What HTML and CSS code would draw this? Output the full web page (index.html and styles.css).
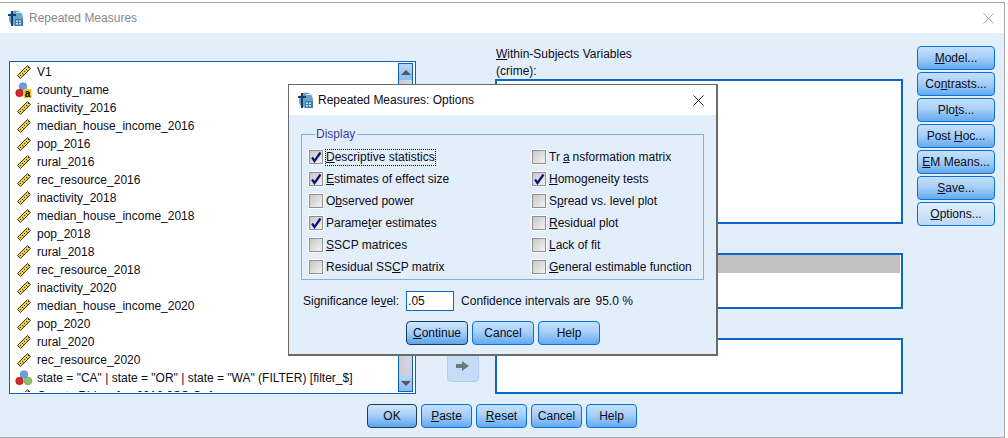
FILE: index.html
```html
<!DOCTYPE html>
<html lang="en">
<head>
<meta charset="utf-8">
<title>Repeated Measures</title>
<link rel="stylesheet" href="styles.css">
</head>
<body>
<svg class="defs" width="0" height="0" aria-hidden="true">
  <defs>
    <symbol id="ruler" viewBox="0 0 16 16">
      <path d="M1.5 11.5 11.5 1.5l3 3-10 10z" fill="#f2cf3a" stroke="#3a3a2a" stroke-width="1"/>
      <path d="M4 11l1 1M6 9l1.500 1.500M8 7l1 1M10 5l1.500 1.500M12 3l1 1" stroke="#3a3a2a" stroke-width="1" fill="none"/>
    </symbol>
    <symbol id="nominal" viewBox="0 0 18 16">
      <circle cx="8" cy="4.500" r="3.800" fill="#6d9fdc" stroke="#4a78b8" stroke-width=".6"/>
      <circle cx="4.500" cy="11" r="3.800" fill="#d4282f" stroke="#a01a20" stroke-width=".6"/>
      <rect x="8.500" y="7" width="8" height="9" fill="#f4c81e"/>
      <text x="12.500" y="15" class="nominal-a">a</text>
    </symbol>
    <symbol id="filter" viewBox="0 0 18 16">
      <circle cx="9" cy="4.500" r="3.800" fill="#6d9fdc" stroke="#4a78b8" stroke-width=".6"/>
      <circle cx="4.500" cy="11" r="3.800" fill="#d4282f" stroke="#a01a20" stroke-width=".6"/>
      <circle cx="13" cy="11" r="3.800" fill="#8fc06a" stroke="#5f8f44" stroke-width=".6"/>
    </symbol>
    <symbol id="app" viewBox="0 0 17 17">
      <path d="M2 8a7 7 0 0 1 14-1v9H8A7 7 0 0 1 2 8z" fill="#6ea3c9"/>
      <path d="M8 9h8v7H8z" fill="#3b7fb0"/>
      <path d="M9 10.500h2v1.500H9zM12 10.500h2v1.500h-2zM9 13h2v1.500H9zM12 13h2v1.500h-2z" fill="#cfe3f2"/>
      <path d="M5 1v15M1 5h8" stroke="#14406e" stroke-width="2" fill="none"/>
      <path d="M9 2.500h7" stroke="#d9e8f3" stroke-width="1"/>
    </symbol>
    <symbol id="check" viewBox="0 0 14 14">
      <path d="M3 7.500 5.500 11 11.500 2.500" fill="none" stroke="#11117a" stroke-width="2.200"/>
    </symbol>
  </defs>
</svg>

<div class="window">
  <header class="titlebar">
    <svg class="app-icon"><use href="#app"/></svg>
    <span class="title-text">Repeated Measures</span>
    <svg class="close close-dim" viewBox="0 0 11 11"><path d="M.5.500l10 10M10.500.500l-10 10"/></svg>
  </header>

  <main class="body">
    <div class="columns">
      <div class="list">
        <ul class="vars">
          <li><svg class="ico"><use href="#ruler"/></svg>V1</li>
          <li><svg class="ico"><use href="#nominal"/></svg>county_name</li>
          <li><svg class="ico"><use href="#ruler"/></svg>inactivity_2016</li>
          <li><svg class="ico"><use href="#ruler"/></svg>median_house_income_2016</li>
          <li><svg class="ico"><use href="#ruler"/></svg>pop_2016</li>
          <li><svg class="ico"><use href="#ruler"/></svg>rural_2016</li>
          <li><svg class="ico"><use href="#ruler"/></svg>rec_resource_2016</li>
          <li><svg class="ico"><use href="#ruler"/></svg>inactivity_2018</li>
          <li><svg class="ico"><use href="#ruler"/></svg>median_house_income_2018</li>
          <li><svg class="ico"><use href="#ruler"/></svg>pop_2018</li>
          <li><svg class="ico"><use href="#ruler"/></svg>rural_2018</li>
          <li><svg class="ico"><use href="#ruler"/></svg>rec_resource_2018</li>
          <li><svg class="ico"><use href="#ruler"/></svg>inactivity_2020</li>
          <li><svg class="ico"><use href="#ruler"/></svg>median_house_income_2020</li>
          <li><svg class="ico"><use href="#ruler"/></svg>pop_2020</li>
          <li><svg class="ico"><use href="#ruler"/></svg>rural_2020</li>
          <li><svg class="ico"><use href="#ruler"/></svg>rec_resource_2020</li>
          <li><svg class="ico"><use href="#filter"/></svg>state = "CA" | state = "OR" | state = "WA" (FILTER) [filter_$]</li>
          <li><svg class="ico"><use href="#ruler"/></svg>County Rid... of ... 2016 0SS O..f</li>
        </ul>
        <div class="scrollbar">
          <div class="sb-btn"><span class="tri-up"></span></div>
          <div class="sb-track"></div>
          <div class="sb-btn"><span class="tri-down"></span></div>
        </div>
      </div>

      <div class="mover">
        <div class="arrow-btn">
          <svg class="arrow" viewBox="0 0 14 12"><path d="M0 4h6V1l7 5-7 5V8H0z" fill="#6f7780"/></svg>
        </div>
      </div>

      <div class="targets">
        <div class="t-label"><span><u>W</u>ithin-Subjects Variables</span><span>(crime):</span></div>
        <div class="box box-a"></div>
        <div class="box box-b"><div class="grey-row"></div></div>
        <div class="box box-c"></div>
      </div>

      <div class="side">
        <button class="btn btn-side"><u>M</u>odel...</button>
        <button class="btn btn-side">Co<u>n</u>trasts...</button>
        <button class="btn btn-side">Plo<u>t</u>s...</button>
        <button class="btn btn-side">Post <u>H</u>oc...</button>
        <button class="btn btn-side"><u>E</u>M Means...</button>
        <button class="btn btn-side"><u>S</u>ave...</button>
        <button class="btn btn-side btn-light"><u>O</u>ptions...</button>
      </div>
    </div>

    <div class="actions">
      <button class="btn btn-main btn-ok">OK</button>
      <button class="btn btn-main"><u>P</u>aste</button>
      <button class="btn btn-main"><u>R</u>eset</button>
      <button class="btn btn-main">Cancel</button>
      <button class="btn btn-main">Help</button>
    </div>
  </main>
</div>

<section class="dialog">
  <header class="d-title">
    <svg class="app-icon"><use href="#app"/></svg>
    <span class="d-title-text">Repeated Measures: Options</span>
    <svg class="close" viewBox="0 0 11 11"><path d="M.5.500l10 10M10.500.500l-10 10"/></svg>
  </header>
  <div class="d-body">
    <fieldset class="group">
      <legend>Display</legend>
      <div class="opts">
        <div class="opt"><span class="cb"><svg><use href="#check"/></svg></span><span class="focus"><u>D</u>escriptive statistics</span></div>
        <div class="opt"><span class="cb"></span>Tr<u>a</u>nsformation matrix</div>
        <div class="opt"><span class="cb"><svg><use href="#check"/></svg></span><span><u>E</u>stimates of effect size</span></div>
        <div class="opt"><span class="cb"><svg><use href="#check"/></svg></span><span><u>H</u>omogeneity tests</span></div>
        <div class="opt"><span class="cb"></span><span>O<u>b</u>served power</span></div>
        <div class="opt"><span class="cb"></span><span>S<u>p</u>read vs. level plot</span></div>
        <div class="opt"><span class="cb"><svg><use href="#check"/></svg></span><span>Parame<u>t</u>er estimates</span></div>
        <div class="opt"><span class="cb"></span><span><u>R</u>esidual plot</span></div>
        <div class="opt"><span class="cb"></span><span><u>S</u>SCP matrices</span></div>
        <div class="opt"><span class="cb"></span><span><u>L</u>ack of fit</span></div>
        <div class="opt"><span class="cb"></span><span>Residual SS<u>C</u>P matrix</span></div>
        <div class="opt"><span class="cb"></span><span><u>G</u>eneral estimable function</span></div>
      </div>
    </fieldset>
    <div class="sig">
      <span>Significance le<u>v</u>el:</span>
      <span class="input">.05</span>
      <span>Confidence intervals are</span>
      <span>95.0 %</span>
    </div>
    <div class="d-actions">
      <button class="btn btn-d btn-ok"><u>C</u>ontinue</button>
      <button class="btn btn-d">Cancel</button>
      <button class="btn btn-d">Help</button>
    </div>
  </div>
</section>
</body>
</html>
```
FILE: styles.css
```css
* { box-sizing: border-box; }
html, body { margin: 0; padding: 0; background: #fff; }
body {
  width: 1008px;
  height: 438px;
  overflow: hidden;
  padding-top: 2px;
  font-family: "Liberation Sans", Arial, sans-serif;
  font-size: 12px;
  color: #0c0c18;
}
u { text-underline-offset: 1px; }
.defs { position: absolute; }
.nominal-a { font: bold 10px "Liberation Sans", sans-serif; fill: #000; text-anchor: middle; }

.window {
  width: 1005px;
  height: 436px;
  display: flex;
  flex-direction: column;
  border-top: 1px solid #a8a8a8;
  border-bottom: 1px solid #a8a8a8;
  border-right: 1px solid #a8a8a8;
}
.titlebar {
  height: 30px;
  flex: none;
  background: #fff;
  display: flex;
  align-items: center;
  padding: 0 11px 0 7px;
}
.app-icon { width: 17px; height: 17px; flex: none; }
.title-text { margin-left: 5px; color: #858b90; flex: 1; }
.close { width: 11px; height: 11px; flex: none; stroke: #1a1a1a; stroke-width: 1; fill: none; }
.close-dim { stroke: #a8a8a8; margin-right: -1px; }

.body {
  flex: 1;
  background: #e3eefb;
  padding: 28px 0 9px 9px;
  display: flex;
  flex-direction: column;
  justify-content: space-between;
}
.columns { display: flex; height: 333px; }

.list {
  width: 407px;
  height: 333px;
  flex: none;
  border: 1px solid #0a62bc;
  background: #fff;
  display: flex;
  padding: 1px;
  overflow: hidden;
}
.vars { list-style: none; margin: 0; padding: 0; flex: 1; overflow: hidden; }
.vars li {
  height: 18px;
  display: flex;
  align-items: center;
  gap: 4px;
  padding-left: 4px;
  white-space: nowrap;
  overflow: visible;
}
.ico { width: 18px; height: 16px; flex: none; }

.scrollbar { width: 15px; flex: none; display: flex; flex-direction: column; border: 1px solid #0a62bc; margin-right: 1px; }
.sb-btn {
  height: 16px;
  flex: none;
  background: linear-gradient(#b6d6f8, #8abcef);
  display: flex;
  align-items: center;
  justify-content: center;
}
.sb-track { flex: 1; background: linear-gradient(90deg, #cccbd6, #d6d5df); }
.tri-up { width: 0; height: 0; border: 5px solid transparent; border-top: 0; border-bottom: 5px solid #555; }
.tri-down { width: 0; height: 0; border: 5px solid transparent; border-bottom: 0; border-top: 5px solid #555; }

.mover { width: 79px; flex: none; display: flex; align-items: flex-end; justify-content: center; padding: 0 1px 12px 15px; }
.arrow-btn {
  width: 32px;
  height: 32px;
  background: #c5dcf6;
  border: 1px solid #aecdf0;
  border-radius: 4px;
  display: flex;
  align-items: center;
  justify-content: center;
}
.arrow { width: 14px; height: 12px; }

.targets { width: 408px; flex: none; margin-top: -15px; display: flex; flex-direction: column; }
.t-label { height: 33px; display: flex; flex-direction: column; line-height: 17px; padding-left: 1px; }
.box { border: 2px solid #0a66c8; background: #fff; }
.box-a { height: 146px; }
.box-b { height: 56px; margin-top: 29px; }
.box-c { height: 56px; margin-top: 29px; }
.grey-row { height: 18px; background: #c0c0c0; margin-right: 1px; }

.side { width: 78px; margin-left: 14px; margin-top: -15px; flex: none; display: flex; flex-direction: column; gap: 2px; }

.btn {
  font: inherit;
  color: #0c0c18;
  height: 24px;
  padding: 0;
  border: 1px solid #0a70d8;
  border-radius: 4px;
  background: linear-gradient(#c4e0fb 0%, #a8d0f8 45%, #62aaee 100%);
  white-space: nowrap;
}
.btn-light { background: linear-gradient(#e0eefc, #bcd8f6); }
.btn-ok { border-color: #1c3a5e; background: linear-gradient(#cfe6fc 0%, #a8d0f8 45%, #5aa4ec 100%); }
.btn-side { width: 78px; height: 24px; }

.actions { display: flex; gap: 4px; margin-left: 358px; }
.btn-main { width: 51px; }
.actions .btn-ok { width: 50px; }

.dialog {
  position: absolute;
  left: 288px;
  top: 84px;
  width: 430px;
  height: 272px;
  border: 1px solid #6a6a6a;
  border-width: 1px 2px 2px 1px;
  background: #e3eefb;
  display: flex;
  flex-direction: column;
}
.d-title {
  height: 30px;
  background: #fff;
  display: flex;
  align-items: center;
  padding: 0 12px 0 8px;
  flex: none;
}
.d-title-text { margin-left: 4px; flex: 1; }
.d-body { flex: 1; display: flex; flex-direction: column; padding: 12px 12px 0 12px; }
.group {
  margin: 0;
  padding: 5px 0 0 7px;
  width: 403px;
  height: 153px;
  border: 1px solid #86aed6;
  min-width: 0;
}
.group legend { padding: 0 2px 0 1px; margin-left: 6px; color: #3c3ca0; line-height: 14px; height: 14px; }
.opts { display: grid; grid-template-columns: 223px 1fr; grid-auto-rows: 22px; }
.opt { display: flex; align-items: center; gap: 3px; white-space: nowrap; }
.cb {
  width: 14px;
  height: 14px;
  flex: none;
  border: 1px solid #8f8f8f;
  background: linear-gradient(135deg, #c8c8c8, #f2f2f2);
  outline: 1px solid #fff;
  outline-offset: 0;
  display: block;
}
.cb svg { width: 14px; height: 14px; display: block; margin: -1px; }
.focus { outline: 1px dotted #000; padding: 0 0 1px 0; }
.sig { display: flex; align-items: center; margin-top: 11px; height: 20px; padding-left: 2px; }
.input {
  width: 48px;
  height: 20px;
  margin: 0 7px 0 7px;
  border: 1px solid #0a66c8;
  background: #fff;
  padding-left: 1px;
  line-height: 18px;
}
.sig span:last-child { margin-left: 5px; }
.d-actions { display: flex; gap: 4px; margin: 10px 0 0 105px; }
.btn-d { width: 62px; }
```
